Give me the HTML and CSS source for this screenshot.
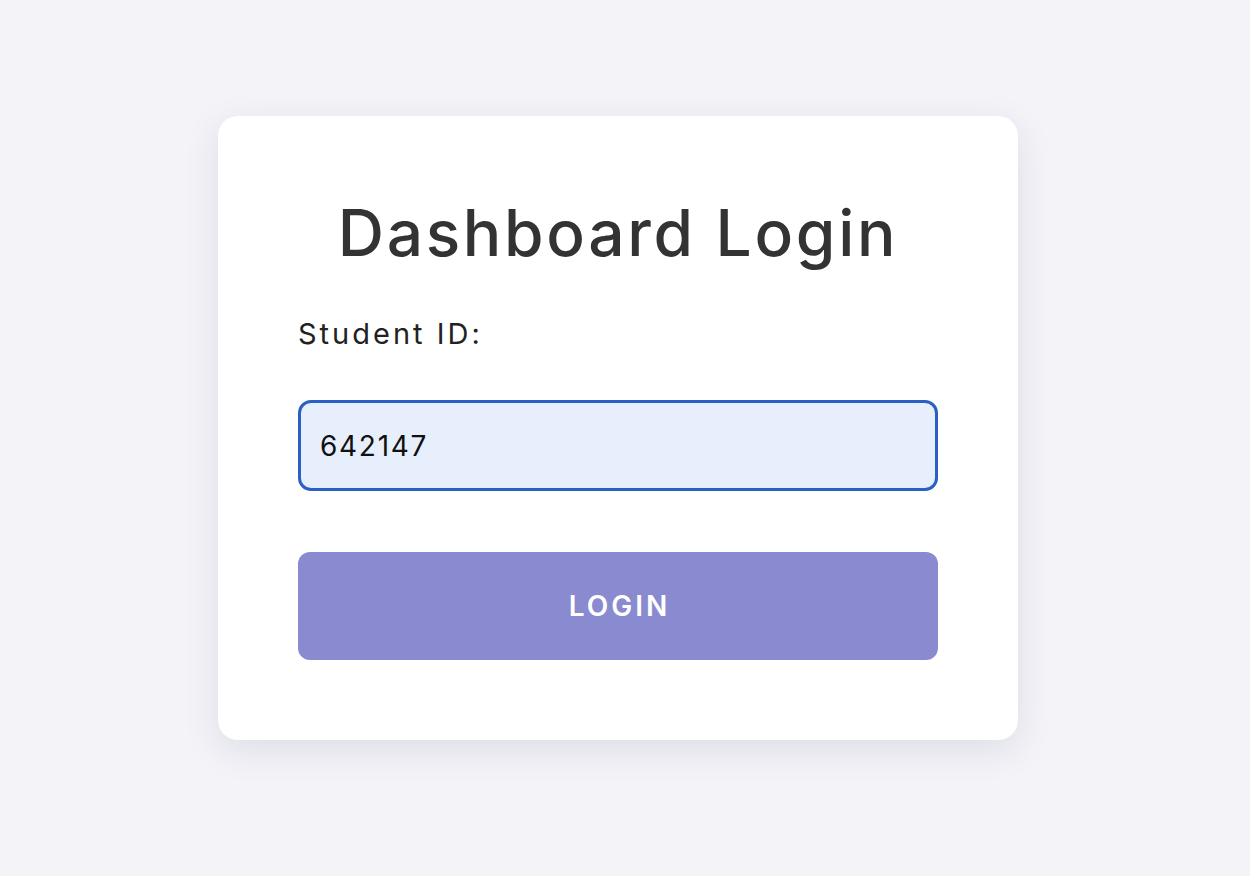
FILE: index.html
```html
<!DOCTYPE html>
<html lang="en">
<head>
<meta charset="utf-8">
<title>Dashboard Login</title>
<link rel="stylesheet" href="styles.css">
</head>
<body>
<main class="page">
  <form class="card">
    <h1 class="title">Dashboard Login</h1>
    <label class="label" for="sid">Student ID:</label>
    <input class="field" id="sid" type="text" value="642147">
    <button class="btn" type="button">LOGIN</button>
  </form>
</main>
</body>
</html>
```

FILE: styles.css
```css
html, body {
  margin: 0;
  padding: 0;
  background: #f3f3f8;
  font-family: "Inter", "DejaVu Sans", sans-serif;
}
.page {
  display: flex;
  justify-content: center;
  align-items: flex-start;
  padding: 116px 14px 0 0;
  min-height: 100vh;
  box-sizing: border-box;
}
.card {
  width: 800px;
  box-sizing: border-box;
  background: #ffffff;
  border-radius: 20px;
  box-shadow: 0 10px 36px rgba(40, 40, 80, 0.10);
  padding: 77px 80px 80px;
  display: flex;
  flex-direction: column;
}
.title {
  margin: 0 0 41px;
  text-align: center;
  font-size: 64px;
  font-weight: 500;
  line-height: 80px;
  letter-spacing: 2.7px;
  color: #333333;
}
.label {
  font-size: 29px;
  line-height: 40px;
  letter-spacing: 3px;
  color: #222222;
  margin-bottom: 46px;
}
.field {
  height: 91px;
  box-sizing: border-box;
  border: 3px solid #2a5fc4;
  border-radius: 13px;
  background: #e8effc;
  padding: 0 19px;
  font-family: inherit;
  font-size: 28px;
  letter-spacing: 1.7px;
  color: #111111;
  outline: none;
  margin: 0 0 61px;
}
.btn {
  height: 108px;
  border: none;
  border-radius: 12px;
  background: #8a8ad1;
  color: #ffffff;
  font-family: inherit;
  font-size: 28px;
  font-weight: 600;
  letter-spacing: 3px;
  padding: 0 0 0 3px;
}
```
